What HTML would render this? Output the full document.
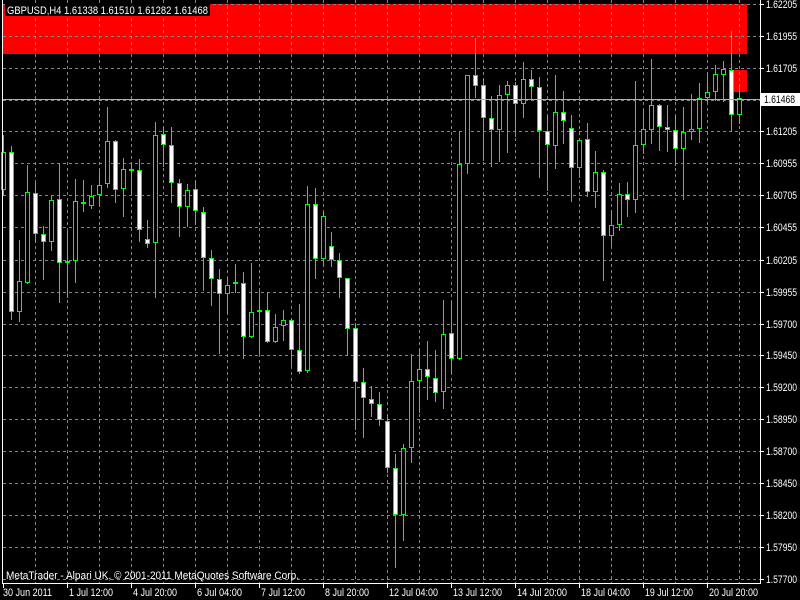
<!DOCTYPE html>
<html><head><meta charset="utf-8">
<style>
html,body{margin:0;padding:0;background:#000;width:800px;height:600px;overflow:hidden}
#c{position:absolute;left:0;top:0}
.t{font-family:"Liberation Sans",sans-serif;font-size:11px;fill:#fff}
</style></head><body>
<svg id="c" width="800" height="600" xmlns="http://www.w3.org/2000/svg">
<rect x="0" y="0" width="800" height="600" fill="#000"/>
<g id="g"></g>
</svg>
<script>
var svg=document.getElementById('g'),h='';
function T(x,y,s,w,fill){return '<text class="t" x="'+x+'" y="'+y+'" textLength="'+w+'" lengthAdjust="spacingAndGlyphs"'+(fill?' style="fill:'+fill+'"':'')+'>'+s+'</text>';}
h+='<rect x="3" y="4" width="744" height="50" fill="#ff0000"/>';
h+='<rect x="733" y="70" width="14" height="22" fill="#ff0000"/>';
var ys=[4,36,68,100,131,163,195,227,260,292,324,355,387,419,451,483,515,547,579];
var labs=['1.62205','1.61955','1.61705','','1.61205','1.60955','1.60705','1.60455','1.60205','1.59955','1.59700','1.59450','1.59200','1.58950','1.58700','1.58450','1.58200','1.57950','1.57700'];
for(var i=0;i<ys.length;i++){
 h+='<line x1="3" x2="760" y1="'+(ys[i]+.5)+'" y2="'+(ys[i]+.5)+'" stroke="#778899" stroke-dasharray="3,3"/>';
 h+='<line x1="760" x2="764" y1="'+(ys[i]+.5)+'" y2="'+(ys[i]+.5)+'" stroke="#fff"/>';
 if(labs[i])h+=T(766,ys[i]+4,labs[i],31);
}
for(var x=35;x<=739;x+=32)h+='<line x1="'+(x+.5)+'" x2="'+(x+.5)+'" y1="0" y2="583" stroke="#778899" stroke-dasharray="3,3"/>';
var d=[[135,152,190,196,0],[146,152,312,320,1],[240,281,312,322,0],[165,192,283,284,0],[183,193,234,243,1],[226,234,242,280,1],[196,200,242,251,0],[164,199,263,303,1],[230,261,263,298,0],[179,201,261,283,0],[180,202,202,212,0],[185,196,206,209,0],[170,185,195,207,0],[107,141,184,188,0],[140,141,190,203,1],[158,169,189,217,0],[163,169,171,195,1],[159,170,230,242,1],[220,239,244,248,1],[122,135,243,298,0],[128,134,145,167,1],[127,145,183,203,1],[179,183,207,237,1],[184,190,207,227,0],[180,189,211,225,1],[207,212,258,291,1],[250,258,279,306,1],[269,279,294,354,1],[278,285,294,314,0],[264,282,282,293,0],[272,283,337,359,1],[263,312,337,338,0],[289,310,312,354,1],[292,310,342,343,1],[314,327,342,343,0],[310,320,326,341,0],[318,320,350,366,1],[304,350,372,374,1],[186,204,371,373,0],[188,204,259,279,1],[213,216,259,264,0],[232,246,260,267,1],[253,260,278,298,1],[278,278,329,356,1],[323,328,382,430,1],[368,382,398,438,1],[386,399,404,417,1],[392,404,420,426,1],[417,421,468,473,1],[454,468,515,568,1],[444,448,515,541,0],[354,381,448,463,0],[350,369,381,413,0],[341,369,377,400,1],[350,378,393,402,1],[300,334,392,409,0],[302,333,359,374,1],[131,164,359,360,0],[75,75,164,174,0],[38,75,86,98,1],[79,85,118,161,1],[96,118,130,167,1],[85,95,130,162,0],[81,85,95,153,0],[82,85,104,137,1],[62,79,104,118,0],[70,79,87,100,1],[77,87,131,178,1],[115,131,145,191,1],[75,112,146,169,0],[91,112,121,144,1],[115,128,168,202,1],[138,140,168,178,0],[123,139,192,197,1],[151,172,192,208,0],[170,172,236,281,1],[210,225,236,246,0],[183,194,225,231,0],[182,194,200,217,1],[81,145,200,213,0],[110,129,145,154,0],[59,105,130,144,0],[104,105,127,151,1],[105,127,130,152,1],[116,130,149,166,1],[107,132,149,200,0],[94,129,132,140,0],[83,98,129,143,0],[73,92,98,102,0],[65,74,92,101,0],[61,69,75,102,0],[31,70,115,132,1],[85,98,115,124,0]];
for(var k=0;k<d.length;k++){
 var c=d[k],cx=3+8*k;
 h+='<line x1="'+(cx+.5)+'" x2="'+(cx+.5)+'" y1="'+c[0]+'" y2="'+c[3]+'" stroke="#00ff00"/>';
 var bh=Math.max(c[2]-c[1],2);
 h+='<rect x="'+(cx-1.5)+'" y="'+(c[1]+.5)+'" width="4" height="'+(bh-1)+'" fill="'+(c[4]?'#fff':'#000')+'" stroke="#00ff00"/>';
}
h+='<line x1="3" x2="760" y1="99.5" y2="99.5" stroke="#a8b0b8"/>';
h+='<rect x="761" y="93" width="39" height="13" fill="#fff"/>';
h+=T(764,103,'1.61468',31,'#000');
h+='<line x1="2.5" x2="2.5" y1="0" y2="583" stroke="#fff"/>';
h+='<line x1="760.5" x2="760.5" y1="0" y2="583" stroke="#fff"/>';
h+='<line x1="2" x2="761" y1="583.5" y2="583.5" stroke="#fff"/>';
var tl=['30 Jun 2011','1 Jul 12:00','4 Jul 20:00','6 Jul 04:00','7 Jul 12:00','8 Jul 20:00','12 Jul 04:00','13 Jul 12:00','14 Jul 20:00','18 Jul 04:00','19 Jul 12:00','20 Jul 20:00'];
var tw=[49,44,44,45,44,44,49,49,50,49,48,49];
for(var i=0;i<tl.length;i++){var tx=3+64*i;
 h+='<line x1="'+(tx+.5)+'" x2="'+(tx+.5)+'" y1="583" y2="588" stroke="#fff"/>';
 h+=T(tx+(i?2:0),596,tl[i],tw[i]);}
h+='<rect x="5" y="3" width="205" height="13" fill="#000"/>';
h+=T(7,14,'GBPUSD,H4  1.61338 1.61510 1.61282 1.61468',201);
h+=T(6,579,'MetaTrader - Alpari UK, © 2001-2011 MetaQuotes Software Corp.',293);
svg.innerHTML=h;
</script>
</body></html>
